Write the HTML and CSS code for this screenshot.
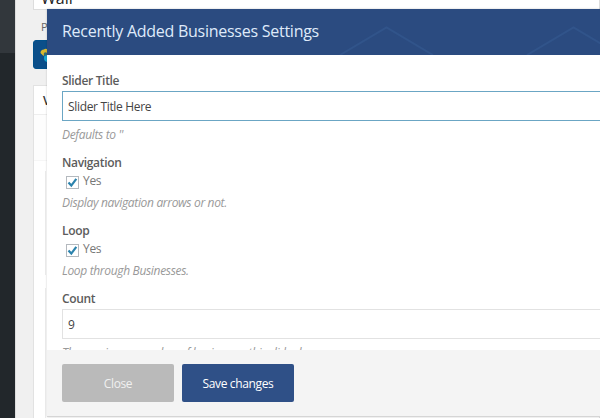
FILE: index.html
```html
<!DOCTYPE html>
<html lang="en">
<head>
<meta charset="utf-8">
<title>Recently Added Businesses Settings</title>
<link rel="stylesheet" href="styles.css">
</head>
<body>
<div class="admin">
  <aside class="sidebar"><div class="sidebar-current"></div></aside>
  <main class="page">
    <div class="post-title"><span>Wall</span></div>
    <div class="permalink">P</div>
    <div class="builder-button">
      <svg width="18" height="18" viewBox="0 0 18 18"><path d="M.5 7Q.5 3.500 4 3.500Q5 2.500 7 3V8H4.500L3.500 10Z" fill="#d9b92f"/><circle cx="8" cy="12" r="4" fill="#16a6d2"/><circle cx="5.500" cy="8" r="1.800" fill="#346a74"/></svg>
    </div>
    <section class="postbox">
      <h2 class="postbox-title">V</h2>
      <div class="postbox-tools"></div>
      <div class="postbox-row postbox-row-first"></div>
      <div class="postbox-row"></div>
    </section>
  </main>
</div>
<div class="modal" role="dialog">
  <header class="modal-header">
    <h1 class="modal-title">Recently Added Businesses Settings</h1>
    <svg class="pattern" width="300" height="46" viewBox="0 0 300 46" fill="none" stroke="#31548a" stroke-width="2"><path d="M40 46 86.500 18.500 133 46M227 46 273.500 18.500 320 46"/></svg>
  </header>
  <form class="modal-body">
    <div class="field">
      <label class="label">Slider Title</label>
      <div class="input input-focus">Slider Title Here</div>
      <p class="hint">Defaults to ''</p>
    </div>
    <div class="field field-check">
      <div class="label">Navigation</div>
      <div class="choice"><span class="box"><svg width="11" height="11" viewBox="0 0 11 11"><path d="M1.500 5.500 4.300 8.600 9.300 1.800" fill="none" stroke="#2c83ad" stroke-width="2.200"/></svg></span><span>Yes</span></div>
      <p class="hint">Display navigation arrows or not.</p>
    </div>
    <div class="field field-check">
      <div class="label">Loop</div>
      <div class="choice"><span class="box"><svg width="11" height="11" viewBox="0 0 11 11"><path d="M1.500 5.500 4.300 8.600 9.300 1.800" fill="none" stroke="#2c83ad" stroke-width="2.200"/></svg></span><span>Yes</span></div>
      <p class="hint">Loop through Businesses.</p>
    </div>
    <div class="field">
      <label class="label">Count</label>
      <div class="input">9</div>
      <p class="hint">The maximum number of businesses this slider has.</p>
    </div>
  </form>
  <footer class="modal-footer">
    <button class="button">Close</button>
    <button class="button button-primary">Save changes</button>
  </footer>
</div>
</body>
</html>
```
FILE: styles.css
```css
* { box-sizing: border-box; }
body {
  margin: 0;
  height: 418px;
  overflow: hidden;
  font: 12px/18px "Open Sans", sans-serif;
  letter-spacing: -.33px;
  color: #555;
}
h1, h2, p { margin: 0; font-weight: 400; }
.admin { display: flex; height: 418px; overflow: hidden; background: #f0f0f0; }
.sidebar { width: 16px; background: #22272b; border-right: 1px solid #ddd; }
.sidebar-current { height: 53px; background: #32373c; }
.page { flex: 1; display: flex; flex-direction: column; padding-left: 17px; }
.page > * { flex: none; }
.post-title {
  display: flex;
  align-items: flex-end;
  height: 10px;
  padding-left: 7px;
  overflow: hidden;
  background: #fff;
  border: 1px solid #ddd;
  border-top: 0;
  font-size: 16px;
  line-height: 22px;
  letter-spacing: 0;
  color: #222;
}
.permalink { height: 30px; padding: 8px 0 0 8px; font-size: 11px; color: #666; }
.builder-button {
  height: 29px;
  padding: 5px 6px;
  border: 1px solid #00518c;
  border-radius: 3px;
  background: #0b4f8a;
}
.builder-button svg { display: block; }
.postbox { height: 340px; margin-top: 16px; border: 1px solid #e2e2e2; background: #fff; }
.postbox-title { height: 29px; padding: 6px 0 0 9px; border-bottom: 1px solid #eee; font-size: 12px; font-weight: 600; color: #333; }
.postbox-tools { height: 46px; background: #fdfdfd; border-bottom: 1px solid #f6f6f6; }
.postbox-row { height: 150px; margin-left: 11px; border-left: 1px solid #ececec; }
.postbox-row-first { height: 104px; margin: 10px 0 13px 11px; }

.modal {
  position: absolute;
  left: 47px;
  top: 9px;
  width: 573px;
  height: 408px;
  display: flex;
  flex-direction: column;
  background: #fff;
  box-shadow: 0 0 2px rgba(0, 0, 0, .2);
}
.modal-header {
  display: flex;
  justify-content: space-between;
  height: 46px;
  padding-left: 15px;
  overflow: hidden;
  background: #2b4b80;
}
.modal-title { flex: none; width: 238px; white-space: nowrap; font-size: 16px; line-height: 45px; letter-spacing: -.26px; color: #dfeafa; }
.pattern { flex: none; margin-right: 20px; }
.modal-body { flex: 1; min-height: 0; overflow: hidden; padding: 17px 0 0 15px; }
.field { height: 82px; }
.field-check { height: 68px; }
.label { display: block; height: 19px; line-height: 18px; font-weight: 600; color: #5c5c5c; }
.field-check .label { height: 18px; }
.input {
  height: 30px;
  padding-left: 5px;
  border: 1px solid #e2e2e2;
  line-height: 29px;
  color: #444;
}
.input-focus { border-color: #6ba6c4; }
.hint { padding-top: 5px; font-style: italic; color: #999; }
.field-check .hint { padding-top: 4px; }
.choice { display: flex; gap: 4px; height: 18px; padding-left: 4px; color: #777; }
.box { width: 13px; height: 13px; margin-top: 4px; border: 1px solid #b4b9be; }
.box svg { display: block; }
.modal-footer {
  display: flex;
  gap: 8px;
  height: 67px;
  padding: 14px 15px 0;
  background: #f4f4f4;
  border-bottom: 1px solid #d5d5d5;
}
.button {
  width: 112px;
  height: 38px;
  padding: 0;
  border: 0;
  border-radius: 2px;
  background: #bababa;
  color: #f0f0f0;
  font: 12px "Open Sans", sans-serif;
  letter-spacing: -.36px;
}
.button-primary { background: #2f5087; color: #fff; }
```
